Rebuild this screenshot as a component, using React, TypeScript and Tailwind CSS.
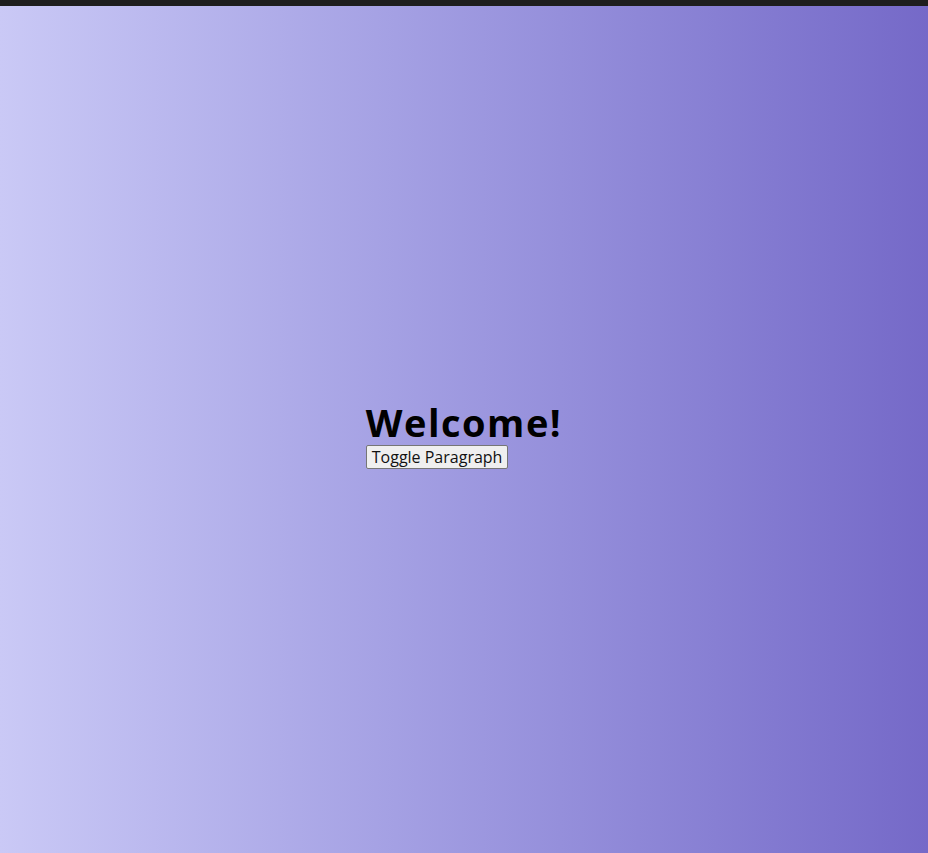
export default function App() {
  return (
    <div className="h-[853px] flex flex-col overflow-hidden" style={{ fontFamily: "'Open Sans', Lato, sans-serif" }}>
      <div className="h-[6px] bg-[#1e1e1e] shrink-0" />
      <div className="flex-1 flex items-center justify-center bg-gradient-to-r from-[#cac9f6] to-[#7569c8]">
        <div className="flex flex-col items-start mt-[8px]">
          <h1 className="text-[38px] font-bold leading-[46px] text-black tracking-[1.5px]">Welcome!</h1>
          <button className="h-[24px] text-[16px] leading-[20px] px-[5px] bg-[#efefef] border border-[#767676] rounded-[2px] text-[#111]">
            Toggle Paragraph
          </button>
        </div>
      </div>
    </div>
  );
}
